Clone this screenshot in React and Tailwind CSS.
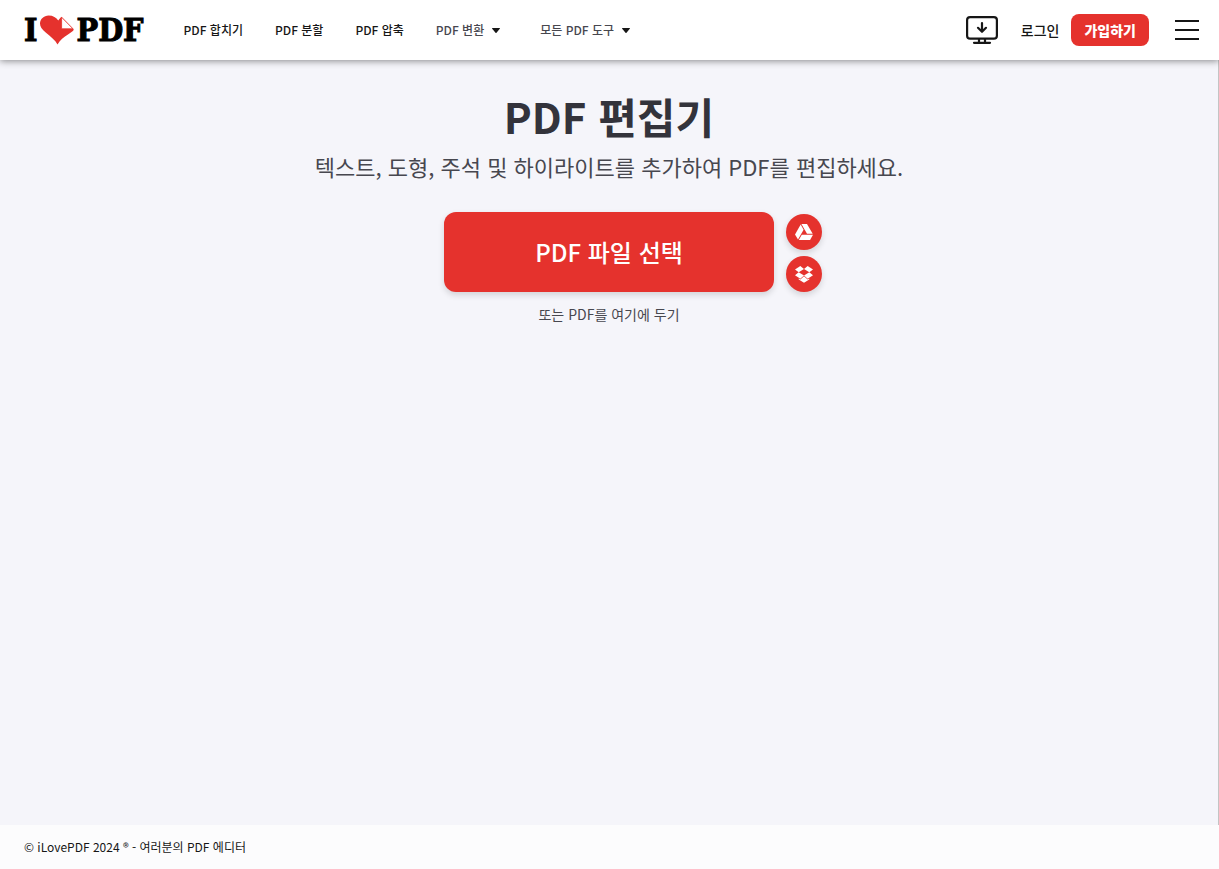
import React from "react";

const navLinks = ["PDF 합치기", "PDF 분할", "PDF 압축"];
const navMenus = ["PDF 변환", "모든 PDF 도구"];

const Logo = () => (
  <a
    href="#"
    aria-label="iLovePDF"
    className="flex items-center shrink-0 text-black font-black text-[32px] leading-8 font-['DejaVu_Serif_Condensed',serif] [-webkit-text-stroke:1px_black]"
  >
    <span>I</span>
    <svg viewBox="0 0 34 30" className="w-[34px] h-[30px] ml-[3px] mr-0.5" aria-hidden="true">
      <path
        d="M17.5 29.5C15.5 25.5 11 22 6 17.8C1.8 14.3 0 11.5 0 8.6C0 4 3.8 0.4 8.6 0.4C13 0.4 16.5 2.4 18.2 5.6L21.3 1.8L33.8 14.4C33.4 16 31 17.4 28 19.4C24 22.1 19.8 24.8 17.5 29.5Z"
        fill="#e5322d"
      />
      <path d="M21.6 2.2L33 13.8H21.6Z" fill="#fff" stroke="#e5322d" strokeWidth="0.8" />
    </svg>
    <span>PDF</span>
  </a>
);

const CaretDown = () => (
  <svg viewBox="0 0 8 5" className="w-2 h-[5px]" aria-hidden="true">
    <path d="M0.4 0H7.6Q8.2 0.2 7.8 0.8L4.5 4.7Q4 5.2 3.5 4.7L0.2 0.8Q-0.2 0.2 0.4 0Z" fill="#161616" />
  </svg>
);

const DesktopIcon = () => (
  <svg viewBox="0 0 32 28" className="w-8 h-7" fill="none" stroke="#161616" strokeWidth="2.2" strokeLinecap="round" strokeLinejoin="round">
    <rect x="1.1" y="1.1" width="29.8" height="21.6" rx="3" />
    <path d="M16 7V15.5M12 11.8L16 15.8L20 11.8" />
    <path d="M13 23V26M19 23V26M8 26.8H24" />
  </svg>
);

const DriveIcon = () => (
  <svg viewBox="0 0 18 16" className="w-[18px] h-4" fill="#fff" aria-hidden="true">
    <path d="M5.7 0.6L0 10.4L3 15.6L8.6 5.8Z" />
    <path d="M6.4 0H12L17.7 9.8H12Z" />
    <path d="M6.8 10.7H18L15.1 16H3.8Z" />
  </svg>
);

const DropboxIcon = () => (
  <svg viewBox="0 0 18 17" className="w-[18px] h-[17px]" fill="#fff" aria-hidden="true">
    <path d="M5.3 0L9 3L3.7 6.3L0 3.4Z" />
    <path d="M12.7 0L18 3.4L14.3 6.3L9 3Z" />
    <path d="M3.7 6.3L9 9.6L5.3 12.7L0 9.2Z" />
    <path d="M14.3 6.3L18 9.2L12.7 12.7L9 9.6Z" />
    <path d="M9 10.3L12.7 13.4L14.3 12.4V13.6L9 16.8L3.7 13.6V12.4L5.3 13.4Z" />
  </svg>
);

const Header = () => (
  <header className="relative z-10 flex items-center h-15 pl-6 pr-5 bg-white shadow-[0_1px_7px_0_rgba(0,0,0,0.45)]">
    <Logo />
    <nav className="flex items-center gap-8 ml-10 text-xs font-medium text-[#161616] whitespace-nowrap">
      {navLinks.map((label) => (
        <a key={label} href="#">
          {label}
        </a>
      ))}
      {navMenus.map((label) => (
        <button key={label} type="button" className="flex items-center gap-2 mr-2 text-[#47474f]">
          {label}
          <CaretDown />
        </button>
      ))}
    </nav>
    <div className="flex items-center ml-auto whitespace-nowrap">
      <button type="button" aria-label="데스크톱 앱 다운로드" className="mr-[23px]">
        <DesktopIcon />
      </button>
      <a href="#" className="text-sm font-medium text-[#161616]">
        로그인
      </a>
      <a
        href="#"
        className="flex items-center justify-center h-8 px-[13px] ml-3 rounded-lg bg-[#e5322d] text-sm font-black text-white"
      >
        가입하기
      </a>
      <button type="button" aria-label="메뉴" className="flex flex-col gap-[7px] ml-[26px]">
        <span className="w-6 h-0.5 bg-[#161616]" />
        <span className="w-6 h-0.5 bg-[#161616]" />
        <span className="w-6 h-0.5 bg-[#161616]" />
      </button>
    </div>
  </header>
);

const roundButton =
  "flex items-center justify-center size-9 rounded-full bg-[#e5322d] shadow-[0_3px_6px_0_rgba(0,0,0,0.14)]";

const Uploader = () => (
  <main className="grow flex flex-col items-center px-6 pt-[30px] border-r border-[#c4c4c4] text-center">
    <h1 className="text-[42px] leading-[52px] font-bold text-[#33333b]">PDF 편집기</h1>
    <h2 className="mt-2 text-[22px] leading-8 text-[#47474f]">
      텍스트, 도형, 주석 및 하이라이트를 추가하여 PDF를 편집하세요.
    </h2>
    <div className="grid grid-cols-[36px_330px_36px] gap-3 items-center mt-[30px]">
      <button
        type="button"
        className="col-start-2 h-20 rounded-xl bg-[#e5322d] text-2xl font-medium text-white shadow-[0_3px_6px_0_rgba(0,0,0,0.14)]"
      >
        PDF 파일 선택
      </button>
      <div className="flex flex-col gap-1.5 pt-0.5">
        <button type="button" aria-label="Google Drive" className={roundButton}>
          <DriveIcon />
        </button>
        <button type="button" aria-label="Dropbox" className={roundButton}>
          <DropboxIcon />
        </button>
      </div>
    </div>
    <p className="mt-3 text-sm text-[#47474f]">또는 PDF를 여기에 두기</p>
  </main>
);

const App = () => (
  <div
    lang="ko"
    className="flex flex-col min-h-screen bg-[#f5f5fa] font-['Noto_Sans_CJK_KR',sans-serif]"
  >
    <Header />
    <Uploader />
    <footer className="flex items-center h-11 px-6 bg-[#fcfcfd] text-xs text-[#161616]">
      © iLovePDF 2024 ® - 여러분의 PDF 에디터
    </footer>
  </div>
);

export default App;
